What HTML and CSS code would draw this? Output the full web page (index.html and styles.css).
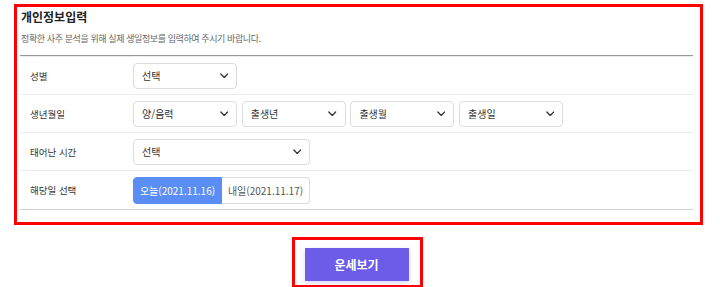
FILE: index.html
```html
<!DOCTYPE html>
<html lang="ko">
<head>
<meta charset="utf-8">
<title>개인정보입력</title>
<link rel="stylesheet" href="styles.css">
</head>
<body>
<div class="page">
  <section class="panel">
    <h2 class="title">개인정보입력</h2>
    <p class="desc">정확한 사주 분석을 위해 실제 생일정보를 입력하여 주시기 바랍니다.</p>
    <div class="table">
      <div class="row">
        <div class="label">성별</div>
        <div class="field">
          <div class="select"><span>선택</span><svg class="chev" viewBox="0 0 10 6"><path d="M1 1l4 4 4-4"/></svg></div>
        </div>
      </div>
      <div class="row">
        <div class="label">생년월일</div>
        <div class="field">
          <div class="select"><span>양/음력</span><svg class="chev" viewBox="0 0 10 6"><path d="M1 1l4 4 4-4"/></svg></div>
          <div class="select"><span>출생년</span><svg class="chev" viewBox="0 0 10 6"><path d="M1 1l4 4 4-4"/></svg></div>
          <div class="select"><span>출생월</span><svg class="chev" viewBox="0 0 10 6"><path d="M1 1l4 4 4-4"/></svg></div>
          <div class="select"><span>출생일</span><svg class="chev" viewBox="0 0 10 6"><path d="M1 1l4 4 4-4"/></svg></div>
        </div>
      </div>
      <div class="row">
        <div class="label">태어난 시간</div>
        <div class="field">
          <div class="select wide"><span>선택</span><svg class="chev" viewBox="0 0 10 6"><path d="M1 1l4 4 4-4"/></svg></div>
        </div>
      </div>
      <div class="row last">
        <div class="label">해당일 선택</div>
        <div class="field">
          <div class="toggle">
            <button class="opt on">오늘(2021.11.16)</button>
            <button class="opt">내일(2021.11.17)</button>
          </div>
        </div>
      </div>
    </div>
  </section>
  <div class="action">
    <div class="highlight">
      <button class="run">운세보기</button>
    </div>
  </div>
</div>
</body>
</html>
```

FILE: styles.css
```css
* { box-sizing: border-box; }
html, body { margin: 0; padding: 0; background: #fff; }
body {
  font-family: "Noto Sans CJK KR", "Noto Sans", sans-serif;
  color: #333;
}
.page {
  width: 689px;
  margin-left: 14px;
  padding-top: 4px;
}
.panel {
  border: 3px solid #ff0000;
  padding: 2px 7px 12px 3px;
}
.title {
  margin: 0;
  font-size: 12px;
  line-height: 16px;
  font-weight: 700;
  color: #222;
  padding-left: 1px;
}
.desc {
  margin: 7px 0 0 0;
  font-size: 9px;
  line-height: 14px;
  color: #666;
  padding-left: 1px;
  letter-spacing: -0.4px;
}
.table {
  margin-top: 9px;
  border-top: 1px solid #999;
  border-bottom: 1px solid #cfcfcf;
}
.row {
  display: flex;
  align-items: center;
  height: 38px;
  border-top: 1px solid #ececec;
}
.row.last { height: 39px; }
.label {
  width: 113px;
  padding-left: 10px;
  font-size: 9.5px;
  color: #333;
}
.field {
  display: flex;
  gap: 4.7px;
}
.select {
  width: 104px;
  height: 26px;
  border: 1px solid #dcdcdc;
  border-radius: 4px;
  display: flex;
  align-items: center;
  justify-content: space-between;
  padding: 0 8px 0 8px;
  font-size: 10px;
  color: #333;
  background: #fff;
}
.select.wide { width: 177px; }
.chev {
  width: 8.5px;
  height: 5.5px;
  fill: none;
  stroke: #333;
  stroke-width: 1.5;
  stroke-linecap: round;
  stroke-linejoin: round;
}
.toggle {
  display: flex;
}
.opt {
  height: 27px;
  width: 89px;
  border: 1px solid #dcdcdc;
  background: #fff;
  color: #555;
  font-family: inherit;
  font-size: 10px;
  padding: 0;
  cursor: pointer;
}
.opt + .opt {
  width: 88px;
  border-left: 0;
  border-radius: 0 4px 4px 0;
}
.opt.on {
  background: #5b8ef4;
  border-color: #5b8ef4;
  color: #fff;
  border-radius: 4px 0 0 4px;
}
.action {
  display: flex;
  justify-content: center;
  margin-top: 12px;
}
.highlight {
  border: 3px solid #ff0000;
  padding: 8px 11px 4px 10px;
  margin-right: 3px;
}
.run {
  display: block;
  width: 104px;
  height: 33px;
  border: 0;
  background: #6c5ce7;
  color: #fff;
  font-family: inherit;
  font-size: 12px;
  font-weight: 700;
  box-shadow: 0 2px 5px rgba(108, 92, 231, 0.25);
  cursor: pointer;
}
```
